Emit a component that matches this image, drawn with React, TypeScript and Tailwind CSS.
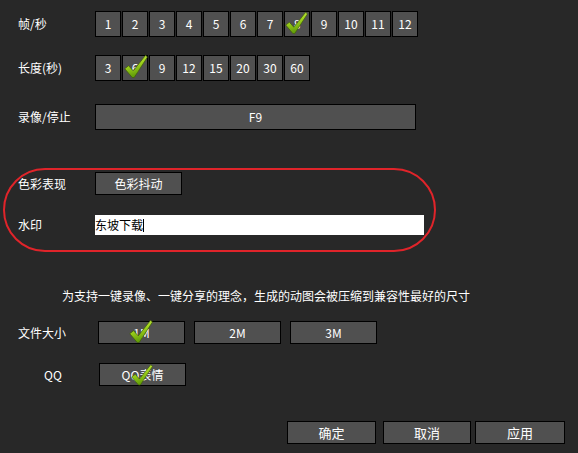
import React from "react";

const FONT = { fontFamily: '"Noto Sans CJK SC", "DejaVu Sans", sans-serif' };

function Check({ className }: { className: string }) {
  return (
    <svg viewBox="0 0 24 24" className={`absolute pointer-events-none ${className}`}>
      <defs>
        <linearGradient id="chk" x1="0" y1="0" x2="0.3" y2="1">
          <stop offset="0" stopColor="#d6f25a" />
          <stop offset="0.5" stopColor="#9fd21c" />
          <stop offset="1" stopColor="#5f9a08" />
        </linearGradient>
      </defs>
      <path
        d="M0.8 14.2 L4.6 11.2 L9.2 16.4 L21.6 0.8 L23.4 2.6 L10.2 23 L8.2 23 Z"
        fill="url(#chk)"
        stroke="#3f5e06"
        strokeWidth="0.7"
        strokeLinejoin="round"
      />
    </svg>
  );
}

function Btn({
  children,
  className = "",
  check,
}: {
  children?: React.ReactNode;
  className?: string;
  check?: string;
}) {
  return (
    <div
      className={`relative flex items-center justify-center bg-[#505050] border border-black text-white text-[12px] leading-none ${className}`}
    >
      {children}
      {check && <Check className={check} />}
    </div>
  );
}

function Label({ children, className = "" }: { children: React.ReactNode; className?: string }) {
  return <div className={`w-[77px] shrink-0 text-white text-[12px] leading-none ${className}`}>{children}</div>;
}

export default function App() {
  const fps = [1, 2, 3, 4, 5, 6, 7, 8, 9, 10, 11, 12];
  const lens = [3, 6, 9, 12, 15, 20, 30, 60];

  return (
    <div className="w-[578px] h-[453px] bg-[#282828] overflow-hidden" style={FONT}>
      {/* 帧/秒 */}
      <div className="flex items-center pt-[11px] pl-[18px]">
        <Label>帧/秒</Label>
        <div className="flex gap-px">
          {fps.map((n) => (
            <Btn key={n} className="w-[26px] h-[26px]" check={n === 8 ? "left-[0px] -top-px w-[23px] h-[24px]" : undefined}>
              {n}
            </Btn>
          ))}
        </div>
      </div>

      {/* 长度 */}
      <div className="flex items-center mt-[18px] pl-[18px]">
        <Label>长度(秒)</Label>
        <div className="flex gap-px">
          {lens.map((n) => (
            <Btn key={n} className="w-[26px] h-[26px]" check={n === 6 ? "left-[1px] -top-[2px] w-[24px] h-[25px]" : undefined}>
              {n}
            </Btn>
          ))}
        </div>
      </div>

      {/* 录像/停止 */}
      <div className="flex items-center mt-[23px] pl-[18px]">
        <Label>录像/停止</Label>
        <Btn className="w-[321px] h-[26px]">F9</Btn>
      </div>

      {/* 红框 */}
      <div className="mt-[38px] ml-[3px] w-[433px] h-[84px] border-2 border-[#e0242a] rounded-[42px] pl-[13px] pt-[2px]">
        <div className="flex items-center">
          <Label>色彩表现</Label>
          <Btn className="w-[87px] h-[23px]">色彩抖动</Btn>
        </div>
        <div className="flex items-center mt-[20px]">
          <Label>水印</Label>
          <div className="w-[329px] h-[20px] bg-white flex items-center text-black text-[12px] leading-none">
            东坡下载
            <span className="inline-block w-px h-[13px] bg-black" />
          </div>
        </div>
      </div>

      <div className="mt-[37px] pl-[62px] text-white text-[12px] leading-[13px]">
        为支持一键录像、一键分享的理念，生成的动图会被压缩到兼容性最好的尺寸
      </div>

      {/* 文件大小 */}
      <div className="flex items-center mt-[19px] pl-[18px]">
        <div className="w-[80px] shrink-0 text-white text-[12px] leading-none">文件大小</div>
        <div className="flex gap-[9px]">
          <Btn className="w-[87px] h-[23px]" check="left-[30px] -top-[3px] w-[24px] h-[25px]">1M</Btn>
          <Btn className="w-[87px] h-[23px]">2M</Btn>
          <Btn className="w-[87px] h-[23px]">3M</Btn>
        </div>
      </div>

      {/* QQ */}
      <div className="flex items-center mt-[19px] pl-[44px]">
        <div className="w-[55px] shrink-0 text-white text-[12px] leading-none">QQ</div>
        <Btn className="w-[87px] h-[23px]" check="left-[30px] top-0 w-[24px] h-[22px]">QQ表情</Btn>
      </div>

      {/* 底部按钮 */}
      <div className="flex mt-[35px] pl-[287px]">
        <Btn className="w-[89px] h-[23px] text-[13px]">确定</Btn>
        <Btn className="w-[88px] h-[23px] text-[13px] ml-[7px]">取消</Btn>
        <Btn className="w-[90px] h-[23px] text-[13px] ml-[4px]">应用</Btn>
      </div>
    </div>
  );
}
